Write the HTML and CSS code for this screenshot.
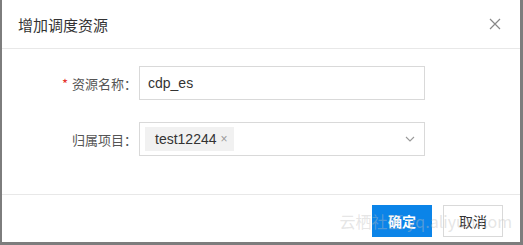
FILE: index.html
```html
<!DOCTYPE html>
<html lang="zh-CN">
<head>
    <meta charset="UTF-8">
    <meta name="viewport" content="width=device-width, initial-scale=1.0">
    <title>增加调度资源</title>
    <link rel="stylesheet" href="styles.css">
</head>
<body>
    <div class="modal">
        <div class="modal-header">
            <h2>增加调度资源</h2>
            <span class="close">
                <svg width="12" height="12" viewBox="0 0 12 12"><path d="M1 1L11 11M11 1L1 11" stroke="#888" stroke-width="1.2" fill="none"/></svg>
            </span>
        </div>
        <div class="modal-body">
            <div class="form-row">
                <label><span class="req">*</span>资源名称：</label>
                <div class="field">
                    <input type="text" value="cdp_es">
                </div>
            </div>
            <div class="form-row">
                <label>归属项目：</label>
                <div class="field select">
                    <span class="tag">test12244 <span class="tag-x">×</span></span>
                    <svg class="arrow" width="10" height="6" viewBox="0 0 10 6"><path d="M1 1L5 5L9 1" stroke="#999" stroke-width="1.1" fill="none"/></svg>
                </div>
            </div>
        </div>
        <div class="modal-footer">
            <button class="btn btn-primary">确定</button>
            <button class="btn">取消</button>
            <span class="watermark">云栖社区 yq.aliyun.com</span>
        </div>
    </div>
</body>
</html>
```

FILE: styles.css
```css
body {
    margin: 0;
    background-color: #7d7d7d;
    font-family: "Noto Sans CJK SC", "Liberation Sans", sans-serif;
}
.modal {
    position: relative;
    width: 518px;
    height: 242px;
    margin-left: 2px;
    background-color: #fff;
}
.modal-header {
    display: flex;
    justify-content: space-between;
    align-items: center;
    height: 48px;
    padding: 0 19px 0 16px;
    border-bottom: 1px solid #e8e8e8;
}
.modal-header h2 {
    margin: 0;
    font-size: 15px;
    font-weight: normal;
    color: #333;
}
.close {
    display: flex;
}
.modal-body {
    padding: 17px 0 0;
    height: 128px;
    border-bottom: 1px solid #e8e8e8;
}
.form-row {
    display: flex;
    align-items: center;
    margin-bottom: 22px;
}
.form-row label {
    width: 135px;
    text-align: right;
    padding-right: 2px;
    font-size: 13px;
    color: #555;
}
.req {
    color: #e5312b;
    margin-right: 4px;
}
.field {
    box-sizing: border-box;
    width: 286px;
    height: 34px;
}
.field input {
    box-sizing: border-box;
    width: 100%;
    height: 100%;
    padding: 0 8px;
    border: 1px solid #d9d9d9;
    font-family: "Liberation Sans", sans-serif;
    font-size: 14px;
    color: #333;
    outline: none;
}
.select {
    display: flex;
    align-items: center;
    justify-content: space-between;
    padding: 0 9px 0 5px;
    border: 1px solid #d9d9d9;
}
.tag {
    display: flex;
    align-items: center;
    height: 24px;
    padding: 0 6px 0 10px;
    background-color: #f1f1f1;
    font-family: "Liberation Sans", sans-serif;
    font-size: 14px;
    color: #333;
}
.tag-x {
    margin-left: 4px;
    font-size: 12px;
    color: #999;
}
.modal-footer {
    display: flex;
    justify-content: flex-end;
    gap: 11px;
    padding: 10px 17px 0;
}
.btn {
    width: 60px;
    height: 32px;
    border: 1px solid #d9d9d9;
    background-color: #fff;
    font-family: "Noto Sans CJK SC", sans-serif;
    font-size: 14px;
    color: #333;
    padding: 0;
}
.btn-primary {
    background-color: #0b84e8;
    border-color: #0b84e8;
    color: #fff;
    font-weight: bold;
}
.watermark {
    position: absolute;
    right: 8px;
    bottom: 9px;
    font-size: 16px;
    color: rgba(190, 190, 190, 0.4);
    white-space: nowrap;
    pointer-events: none;
}
```
